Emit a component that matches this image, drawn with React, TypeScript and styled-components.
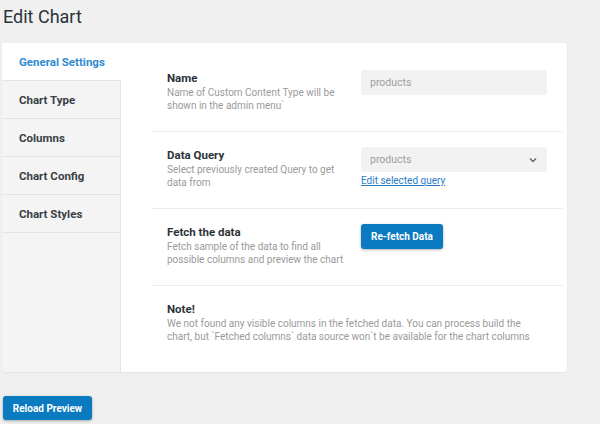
import styled, { createGlobalStyle } from "styled-components";

const GlobalStyle = createGlobalStyle`
  html, body {
    margin: 0;
    padding: 0;
    background: #f0f0f1;
    font-family: Roboto, "Liberation Sans", Arial, sans-serif;
  }
  * { box-sizing: border-box; }
`;

const Page = styled.div`
  padding: 0 2px;
  width: 600px;
  height: 424px;
  overflow: hidden;
`;

const Title = styled.h1`
  margin: 0;
  padding: 6px 0 0 1px;
  height: 43px;
  font-size: 18px;
  font-weight: 400;
  color: #2c3338;
`;

const Card = styled.div`
  display: flex;
  width: 565px;
  height: 329px;
  background: #fff;
  border-radius: 0 4px 4px 4px;
  box-shadow: 0 1px 2px rgba(0, 0, 0, 0.06);
  overflow: hidden;
`;

const Sidebar = styled.div`
  width: 119px;
  flex-shrink: 0;
  background: #f4f4f4;
  border-right: 1px solid #e6e6e6;
  display: flex;
  flex-direction: column;
`;

const Tab = styled.div<{ $active?: boolean }>`
  height: 38px;
  display: flex;
  align-items: center;
  padding-left: 17px;
  font-size: 11.5px;
  font-weight: 700;
  color: ${(p) => (p.$active ? "#2f8ad4" : "#3a3f44")};
  background: ${(p) => (p.$active ? "#fff" : "#f4f4f4")};
  border-bottom: 1px solid #e4e4e4;
  margin-right: ${(p) => (p.$active ? "-1px" : "0")};
`;

const Content = styled.div`
  flex: 1;
  padding: 12px 4px 0 31px;
`;

const Section = styled.div<{ $last?: boolean }>`
  display: grid;
  grid-template-columns: 194px 186px;
  padding: 15px 15px 19px;
  border-bottom: ${(p) => (p.$last ? "none" : "1px solid #ececec")};
`;

const Label = styled.div``;

const LabelTitle = styled.div`
  font-size: 11.5px;
  line-height: 16px;
  font-weight: 700;
  color: #2c3338;
`;

const Desc = styled.div`
  max-width: 180px;
  font-size: 10px;
  line-height: 13px;
  color: #9a9a9a;
`;

const NoteDesc = styled(Desc)`
  max-width: none;
  width: 372px;
`;

const Field = styled.div`
  display: flex;
  flex-direction: column;
  align-items: flex-start;
`;

const Input = styled.div`
  width: 186px;
  height: 25px;
  background: #f2f2f2;
  border-radius: 3px;
  padding: 0 9px;
  display: flex;
  align-items: center;
  justify-content: space-between;
  font-size: 10.5px;
  color: #9e9e9e;
`;

const Link = styled.a`
  margin-top: 2px;
  font-size: 10px;
  line-height: 13px;
  color: #2a7cc7;
  text-decoration: underline;
`;

const Button = styled.button<{ $w: number; $h: number }>`
  width: ${(p) => p.$w}px;
  height: ${(p) => p.$h}px;
  background: #0a7bc1;
  color: #fff;
  border: none;
  border-radius: 3px;
  font-family: inherit;
  font-size: 10px;
  font-weight: 700;
  box-shadow: 0 1px 3px rgba(0, 0, 0, 0.3);
  padding: 0;
`;

const Footer = styled.div`
  padding: 24px 0 0 1px;
`;

const Chevron = () => (
  <svg width="10" height="10" viewBox="0 0 10 10">
    <path d="M2 3.5 L5 6.5 L8 3.5" fill="none" stroke="#666" strokeWidth="1.4" />
  </svg>
);

export default function App() {
  return (
    <Page>
      <GlobalStyle />
      <Title>Edit Chart</Title>
      <Card>
        <Sidebar>
          <Tab $active>General Settings</Tab>
          <Tab>Chart Type</Tab>
          <Tab>Columns</Tab>
          <Tab>Chart Config</Tab>
          <Tab>Chart Styles</Tab>
        </Sidebar>
        <Content>
          <Section>
            <Label>
              <LabelTitle>Name</LabelTitle>
              <Desc>Name of Custom Content Type will be shown in the admin menu`</Desc>
            </Label>
            <Field>
              <Input>products</Input>
            </Field>
          </Section>
          <Section>
            <Label>
              <LabelTitle>Data Query</LabelTitle>
              <Desc>Select previously created Query to get data from</Desc>
            </Label>
            <Field>
              <Input>
                products
                <Chevron />
              </Input>
              <Link>Edit selected query</Link>
            </Field>
          </Section>
          <Section>
            <Label>
              <LabelTitle>Fetch the data</LabelTitle>
              <Desc>Fetch sample of the data to find all possible columns and preview the chart</Desc>
            </Label>
            <Field>
              <Button $w={82} $h={25}>Re-fetch Data</Button>
            </Field>
          </Section>
          <Section $last>
            <Label>
              <LabelTitle>Note!</LabelTitle>
              <NoteDesc>
                We not found any visible columns in the fetched data. You can process build the
                chart, but `Fetched columns` data source won`t be available for the chart columns
              </NoteDesc>
            </Label>
          </Section>
        </Content>
      </Card>
      <Footer>
        <Button $w={89} $h={24}>Reload Preview</Button>
      </Footer>
    </Page>
  );
}
